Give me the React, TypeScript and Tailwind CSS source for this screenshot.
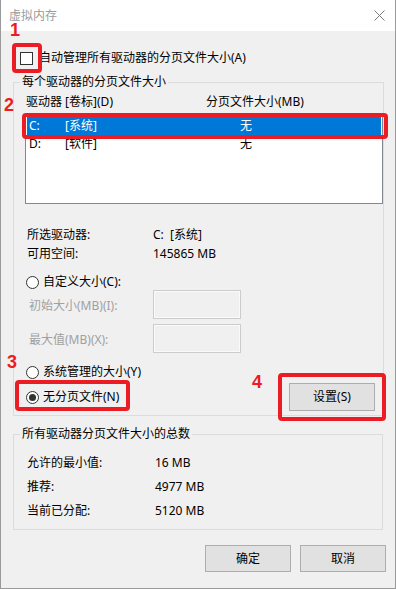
import React from "react";

function Radio({ checked, label }: { checked?: boolean; label: string }) {
  return (
    <div className="flex items-center gap-[4px] h-[16px]">
      <span className="w-[13px] h-[13px] rounded-full border border-[#333333] bg-white flex items-center justify-center">
        {checked && <span className="w-[7px] h-[7px] rounded-full bg-[#333333]" />}
      </span>
      <span>{label}</span>
    </div>
  );
}

function Btn({ label, className = "" }: { label: string; className?: string }) {
  return (
    <div
      className={`w-[86px] flex items-center justify-center border border-[#adadad] bg-[#e1e1e1] ${className}`}
    >
      {label}
    </div>
  );
}

const drives = [
  { letter: "C:", label: "[系统]", size: "无", selected: true },
  { letter: "D:", label: "[软件]", size: "无", selected: false },
];

export default function App() {
  return (
    <div className="relative w-[396px] h-[589px] bg-[#f0f0f0] border-x border-b border-[#9a9a9a] font-['Noto_Sans','Noto_Sans_CJK_SC',sans-serif] text-[12px] leading-[16px] text-black flex flex-col">
      {/* 标题栏 */}
      <div className="h-[31px] shrink-0 bg-white flex items-center justify-between pl-[8px] pr-[10px]">
        <span className="text-[#9a9a9a] leading-[14px]">虚拟内存</span>
        <svg width="11" height="11" viewBox="0 0 11 11">
          <path d="M0.5 0.5 L10.5 10.5 M10.5 0.5 L0.5 10.5" stroke="#7a7a7a" strokeWidth="1" />
        </svg>
      </div>

      {/* 自动管理 */}
      <div className="mt-[19px] ml-[19px] flex items-center gap-[6px] h-[16px]">
        <span className="w-[13px] h-[13px] border border-[#333333] bg-white" />
        <span>自动管理所有驱动器的分页文件大小(A)</span>
      </div>

      {/* 每个驱动器 */}
      <fieldset className="mt-[8px] ml-[12px] w-[370px] border border-[#dcdcdc] pb-[4px]">
        <legend className="ml-[6px] px-[2px]">每个驱动器的分页文件大小</legend>
        <div className="mt-[4px] pl-[12px] flex h-[16px]">
          <span className="w-[180px]">驱动器 [卷标](D)</span>
          <span>分页文件大小(MB)</span>
        </div>
        <div className="mt-[4px] ml-[11px] w-[358px] h-[90px] border border-[#828790] bg-white pt-[2px] px-[1px]">
          {drives.map((d) => (
            <div
              key={d.letter}
              className={`h-[18px] flex items-center pl-[2px] ${d.selected ? "bg-[#0078d7] text-white" : ""}`}
            >
              <span className="w-[36px]">{d.letter}</span>
              <span className="w-[175px]">{d.label}</span>
              <span>{d.size}</span>
            </div>
          ))}
        </div>

        <div className="mt-[23px] pl-[13px] flex flex-col gap-[3px]">
          <div className="flex h-[16px]">
            <span className="w-[126px]">所选驱动器:</span>
            <span>C:&nbsp;&nbsp;[系统]</span>
          </div>
          <div className="flex h-[16px]">
            <span className="w-[126px]">可用空间:</span>
            <span>145865 MB</span>
          </div>
        </div>

        <div className="mt-[12px] pl-[12px]">
          <Radio label="自定义大小(C):" />
        </div>
        <div className="pl-[15px] flex flex-col gap-[5px]">
          <div className="flex items-center">
            <span className="w-[124px] text-[#a0a0a0] pt-[3px]">初始大小(MB)(I):</span>
            <span className="w-[88px] h-[29px] border border-[#cccccc] shadow-[inset_0_0_0_1px_#fafafa]" />
          </div>
          <div className="flex items-center">
            <span className="w-[124px] text-[#a0a0a0] pt-[3px]">最大值(MB)(X):</span>
            <span className="w-[88px] h-[29px] border border-[#cccccc] shadow-[inset_0_0_0_1px_#fafafa]" />
          </div>
        </div>

        <div className="mt-[11px] pl-[12px] pr-[8px] flex items-start justify-between">
          <div className="flex flex-col gap-[9px]">
            <Radio label="系统管理的大小(Y)" />
            <Radio checked label="无分页文件(N)" />
          </div>
          <Btn label="设置(S)" className="mt-[19px] h-[28px]" />
        </div>
      </fieldset>

      {/* 总数 */}
      <fieldset className="mt-[10px] ml-[12px] w-[370px] border border-[#dcdcdc] pb-[10px]">
        <legend className="ml-[6px] px-[2px]">所有驱动器分页文件大小的总数</legend>
        <div className="mt-[13px] pl-[13px] flex flex-col gap-[8px]">
          <div className="flex h-[16px]">
            <span className="w-[128px]">允许的最小值:</span>
            <span>16 MB</span>
          </div>
          <div className="flex h-[16px]">
            <span className="w-[128px]">推荐:</span>
            <span>4977 MB</span>
          </div>
          <div className="flex h-[16px]">
            <span className="w-[128px]">当前已分配:</span>
            <span>5120 MB</span>
          </div>
        </div>
      </fieldset>

      <div className="mt-[15px] pr-[9px] flex justify-end gap-[9px]">
        <Btn label="确定" className="h-[27px]" />
        <Btn label="取消" className="h-[27px]" />
      </div>

      {/* 标注 */}
      <div className="absolute left-[11px] top-[43px] w-[30px] h-[30px] border-[4px] border-[#ec1c24] rounded-[4px]" />
      <div className="absolute left-[21px] top-[113px] w-[366px] h-[26px] border-[4px] border-[#ec1c24] rounded-[4px]" />
      <div className="absolute left-[14px] top-[380px] w-[115px] h-[31px] border-[4px] border-[#ec1c24] rounded-[4px]" />
      <div className="absolute left-[277px] top-[373px] w-[108px] h-[48px] border-[4px] border-[#ec1c24] rounded-[4px]" />
      <span className="absolute left-[9px] top-[23px] font-['Liberation_Sans',sans-serif] font-bold text-[18px] leading-[14px] text-[#ec1c24]">1</span>
      <span className="absolute left-[3px] top-[96px] font-['Liberation_Sans',sans-serif] font-bold text-[18px] leading-[18px] text-[#ec1c24]">2</span>
      <span className="absolute left-[6px] top-[353px] font-['Liberation_Sans',sans-serif] font-bold text-[18px] leading-[18px] text-[#ec1c24]">3</span>
      <span className="absolute left-[251px] top-[373px] font-['Liberation_Sans',sans-serif] font-bold text-[18px] leading-[18px] text-[#ec1c24]">4</span>
    </div>
  );
}
